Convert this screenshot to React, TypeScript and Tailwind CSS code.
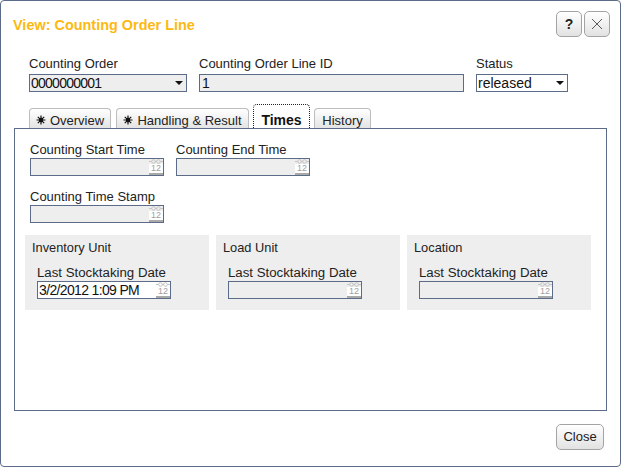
import React from "react";

const Label = ({ children, wide = false }: { children: React.ReactNode; wide?: boolean }) => (
  <div className={`h-[15px] leading-[15px] text-[#222] ${wide ? "text-[13.25px]" : "text-[13px]"}`}>{children}</div>
);

const CalIcon = () => (
  <div className="ml-auto flex h-[16px] w-[14px] shrink-0 flex-col items-stretch self-end">
    <svg width="14" height="5" viewBox="0 0 14 5" className="block">
      <path d="M0 2.5h2.5M6 2.5h2M11.5 2.5h2.5" stroke="#c4c4c4" strokeWidth="1" />
      <circle cx="4.5" cy="2.5" r="1.8" fill="none" stroke="#c4c4c4" />
      <circle cx="9.5" cy="2.5" r="1.8" fill="none" stroke="#c4c4c4" />
    </svg>
    <div className="flex h-[9px] items-end justify-center bg-white text-[9px] leading-[9px] text-[#a0a0a0]">12</div>
    <div className="h-[2px] bg-[#a9a9a9]" />
  </div>
);

const DateInput = ({ value, enabled = false }: { value?: string; enabled?: boolean }) => (
  <div className={`mt-[1px] flex h-[18px] w-[134px] items-center border border-[#5c6b87] pl-[1px] ${enabled ? "bg-white" : "bg-[#eeeeee]"}`}>
    <span className="text-[14px] leading-none tracking-[-0.65px] text-[#111]">{value}</span>
    <CalIcon />
  </div>
);

const Group = ({ title, value }: { title: string; value?: string }) => (
  <div className="h-[75px] w-[184px] bg-[#eeeeee] pl-[7px] pt-[5px]">
    <div className="h-[15px] text-[12.8px] leading-[15px] text-[#222]">{title}</div>
    <div className="ml-[5px] mt-[10px]">
      <Label wide>Last Stocktaking Date</Label>
      <DateInput value={value} enabled={!!value} />
    </div>
  </div>
);

const Star = () => (
  <svg width="10" height="10" viewBox="0 0 10 10" className="mb-[2px] mr-[4px] shrink-0">
    <path d="M5 0.5v9M0.5 5h9M1.8 1.8l6.4 6.4M8.2 1.8l-6.4 6.4" stroke="#111" strokeWidth="1.2" />
    <circle cx="5" cy="5" r="2.2" fill="#111" />
  </svg>
);

const Tab = ({ children, width }: { children: React.ReactNode; width: string }) => (
  <div className={`flex h-[20px] ${width} items-center justify-center rounded-t-[4px] border border-b-0 border-[#bdbdbd] bg-gradient-to-b from-white to-[#e4e4e4] pt-[4px] text-[13px] text-[#222]`}>
    {children}
  </div>
);

const SelectBox = ({ value, width, bg, digits = false }: { value: string; width: string; bg: string; digits?: boolean }) => (
  <div className={`mt-[3px] flex h-[18px] ${width} items-center justify-between border border-[#5c6b87] ${bg} pl-[1px] pr-[3px]`}>
    <span className={digits ? "text-[14px] leading-none tracking-[-0.75px] text-[#111]" : "text-[14px] leading-none text-[#111]"}>{value}</span>
    <svg width="8" height="4" viewBox="0 0 8 4"><path d="M0 0h8L4 4z" fill="#111" /></svg>
  </div>
);

const SquareBtn = ({ children }: { children: React.ReactNode }) => (
  <div className="flex h-[26px] w-[26px] items-center justify-center rounded-[5px] border border-[#a3a3a3] bg-gradient-to-b from-white to-[#e2e2e2] text-[14px] font-bold text-[#222]">
    {children}
  </div>
);

export default function App() {
  return (
    <div className="flex h-[467px] w-[621px] flex-col rounded-[4px] border border-[#5c6b87] bg-white font-['Liberation_Sans',Arial,sans-serif]">
      <div className="flex h-[36px] items-start justify-between pl-[12px] pr-[10px] pt-[10px]">
        <div className="pt-[5px] text-[14.45px] font-bold leading-[18px] text-[#fdb913]">View: Counting Order Line</div>
        <div className="flex gap-[2px]">
          <SquareBtn>?</SquareBtn>
          <SquareBtn>
            <svg width="12" height="12" viewBox="0 0 12 12"><path d="M1 1l10 10M11 1L1 11" stroke="#333" strokeWidth="0.8" fill="none" /></svg>
          </SquareBtn>
        </div>
      </div>

      <div className="mt-[19px] flex gap-[12px] pl-[28px]">
        <div>
          <Label>Counting Order</Label>
          <SelectBox value="0000000001" width="w-[158px]" bg="bg-[#eeeeee]" digits />
        </div>
        <div>
          <Label>Counting Order Line ID</Label>
          <div className="mt-[3px] flex h-[18px] w-[265px] items-center border border-[#5c6b87] bg-[#eeeeee] pl-[2px] text-[14px] leading-none text-[#111]">1</div>
        </div>
        <div>
          <Label>Status</Label>
          <SelectBox value="released" width="w-[92px]" bg="bg-white" />
        </div>
      </div>

      <div className="mt-[12px] flex h-[24px] items-end gap-[4px] pl-[28px]">
        <Tab width="w-[82px]"><Star />Overview</Tab>
        <div className="ml-[1px]">
          <Tab width="w-[133px]"><Star />Handling &amp; Result</Tab>
        </div>
        <div className="flex h-[24px] w-[57px] items-center justify-center rounded-t-[4px] border border-b-0 border-dotted border-[#222] pt-[7px] text-[14px] font-bold text-[#111]">Times</div>
        <Tab width="w-[57px]">History</Tab>
      </div>

      <div className="ml-[13px] flex h-[283px] w-[593px] flex-col border border-[#5c6b87] pl-[15px] pt-[13px]">
        <div className="flex gap-[12px]">
          <div>
            <Label>Counting Start Time</Label>
            <DateInput />
          </div>
          <div>
            <Label>Counting End Time</Label>
            <DateInput />
          </div>
        </div>
        <div className="mt-[13px]">
          <Label>Counting Time Stamp</Label>
          <DateInput />
        </div>
        <div className="-ml-[5px] mt-[12px] flex gap-[7px]">
          <Group title="Inventory Unit" value="3/2/2012 1:09 PM" />
          <Group title="Load Unit" />
          <Group title="Location" />
        </div>
      </div>

      <div className="flex justify-end pr-[16px] pt-[13px]">
        <div className="flex h-[26px] w-[48px] items-center justify-center rounded-[5px] border border-[#a3a3a3] bg-gradient-to-b from-white to-[#e2e2e2] text-[13px] text-[#222]">Close</div>
      </div>
    </div>
  );
}
